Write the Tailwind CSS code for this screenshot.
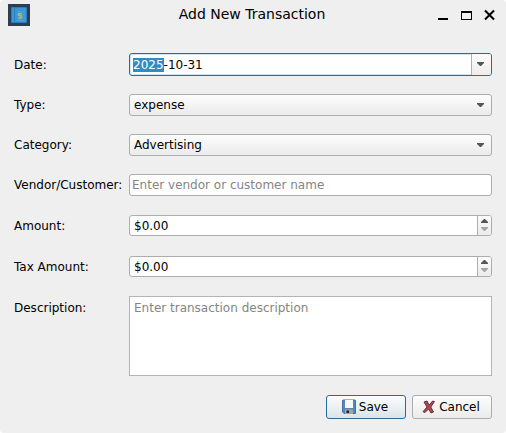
<!DOCTYPE html>
<html lang="en">
<head>
<meta charset="utf-8">
<title>Add New Transaction</title>
<script src="https://cdn.jsdelivr.net/npm/@tailwindcss/browser@4"></script>
</head>
<body class="bg-white overflow-hidden">
<div class="w-[506px] h-[433px] bg-[#efefef] rounded-[4px] flex flex-col text-[12px] leading-[14px] text-black font-['DejaVu_Sans',sans-serif]">
  <header class="h-[53px] shrink-0 grid grid-cols-[80px_1fr_80px] pl-2 pr-[10px]">
    <svg class="mt-1" width="22" height="22" viewBox="0 0 22 22">
      <rect width="22" height="22" fill="#2c3e50"/>
      <rect x="3" y="3" width="16" height="16" rx="1" fill="#2980b9"/>
      <path d="M4 4h2v14H4zM7 4h11v14H7z" fill="#3498db"/>
      <path d="M9 7.500h8M9 10.500h8M9 13.500h8M9 16.500h8" stroke="#5eade2" stroke-width=".5"/>
      <path d="M14 9.500h-3.500v2h3v2.500h-3.500M12 8.500v7" fill="none" stroke="#c9b52d" stroke-width="1.2"/>
    </svg>
    <h1 class="mt-[6px] text-center text-[14px] leading-[17px]">Add New Transaction</h1>
    <div class="flex justify-end gap-[12px] pt-[9px] pr-px">
      <svg width="11" height="12" viewBox="0 0 11 12"><path d="M0 9h10v2H0z"/></svg>
      <svg width="11" height="12" viewBox="0 0 11 12"><path fill-rule="evenodd" d="M0 2h11v9H0zM1 4h9v6H1z"/></svg>
      <svg width="11" height="12" viewBox="0 0 11 12"><path d="M1 1.500l9 9M10 1.500l-9 9" stroke="#000" stroke-width="2.1"/></svg>
    </div>
  </header>
  <main class="grid grid-cols-[115px_363px] pl-[14px] grid-rows-[23px_22px_22px_22px_23px_23px_80px] gap-y-[18px] items-center">
    <label>Date:</label>
    <div class="h-full flex rounded-[3px] border border-[#246d9f] bg-white overflow-hidden shadow-[inset_0_0_0_1px_#d5e5ef]">
      <div class="flex-1 flex items-center pl-[3px]"><span class="bg-[#308cc6] text-white">2025</span>-10-31</div>
      <div class="w-[20px] border-l border-[#b0b0b0] bg-linear-to-b from-[#fcfcfc] to-[#eeeeee] pl-[5px] pt-[8px]"><svg width="7" height="4" viewBox="0 0 7 4"><path d="M0 0h7v1L4 4H3L0 1z" fill="#555"/></svg></div>
    </div>
    <label>Type:</label>
    <div class="h-full flex items-center justify-between pl-1 pr-[7px] rounded-[3px] border border-[#adadad] bg-linear-to-b from-[#fdfdfd] to-[#ebebeb]">expense<svg width="7" height="4" viewBox="0 0 7 4"><path d="M0 0h7v1L4 4H3L0 1z" fill="#555"/></svg></div>
    <label>Category:</label>
    <div class="h-full flex items-center justify-between pl-1 pr-[7px] rounded-[3px] border border-[#adadad] bg-linear-to-b from-[#fdfdfd] to-[#ebebeb]">Advertising<svg width="7" height="4" viewBox="0 0 7 4"><path d="M0 0h7v1L4 4H3L0 1z" fill="#555"/></svg></div>
    <label>Vendor/Customer:</label>
    <div class="h-full flex items-center pl-[2px] rounded-[3px] border border-[#adadad] bg-white text-[#858585]">Enter vendor or customer name</div>
    <label class="pt-px">Amount:</label>
    <div class="h-[21px] flex rounded-[3px] border border-[#adadad] bg-white overflow-hidden">
      <div class="flex-1 flex items-center pl-1">$0.00</div>
      <div class="w-[14px] border-l border-[#adadad] bg-linear-to-b from-[#fcfcfc] to-[#ebebeb] flex flex-col items-center pt-[3px] gap-[4px]"><svg width="7" height="4" viewBox="0 0 7 4"><path d="M0 4V3l3-3h1l3 3v1z" fill="#555"/></svg><svg width="7" height="4" viewBox="0 0 7 4"><path d="M0 0h7v1L4 4H3L0 1z" fill="#a5a5a5"/></svg></div>
    </div>
    <label class="pt-px">Tax Amount:</label>
    <div class="h-[21px] flex rounded-[3px] border border-[#adadad] bg-white overflow-hidden">
      <div class="flex-1 flex items-center pl-1">$0.00</div>
      <div class="w-[14px] border-l border-[#adadad] bg-linear-to-b from-[#fcfcfc] to-[#ebebeb] flex flex-col items-center pt-[3px] gap-[4px]"><svg width="7" height="4" viewBox="0 0 7 4"><path d="M0 4V3l3-3h1l3 3v1z" fill="#555"/></svg><svg width="7" height="4" viewBox="0 0 7 4"><path d="M0 0h7v1L4 4H3L0 1z" fill="#a5a5a5"/></svg></div>
    </div>
    <label class="self-start pt-[5px]">Description:</label>
    <div class="h-full pl-1 pt-[4px] border border-[#b4b4b4] bg-white text-[#858585]">Enter transaction description</div>
  </main>
  <footer class="mt-auto mb-[14px] pr-[14px] flex justify-end gap-[6px]">
    <button class="w-[80px] h-[24px] pr-[2px] flex items-center justify-center gap-[3px] rounded-[3px] border border-[#246d9f] bg-linear-to-b from-[#fbfdfe] to-[#dce4e9]">
      <svg width="14" height="16" viewBox="0 0 14 16"><path d="M1 1h12l.5.5v13H2L.5 13V1.500z" fill="#5585c4" stroke="#4a6fa6"/><path d="M3 1h8v8H3z" fill="#f8f8f8"/><path d="M3 10.500h8V15H3z" fill="#a2a6a2"/><path d="M4.500 11.500H7V14H4.500z" fill="#222"/></svg>Save</button>
    <button class="w-[80px] h-[24px] pr-[2px] flex items-center justify-center gap-[3px] rounded-[3px] border border-[#adadad] bg-linear-to-b from-[#fdfdfd] to-[#ebebeb]">
      <svg width="14" height="16" viewBox="0 0 14 16"><path d="M2 3l3-1 2.200 4.200L10.500 2l2 .5L8.800 8l2.700 5-2.500 1-2.500-4L3 13.500l-2-.8L5 8z" fill="#b14550" stroke="#5d262c" stroke-width=".9"/></svg>Cancel</button>
  </footer>
</div>
</body>
</html>
